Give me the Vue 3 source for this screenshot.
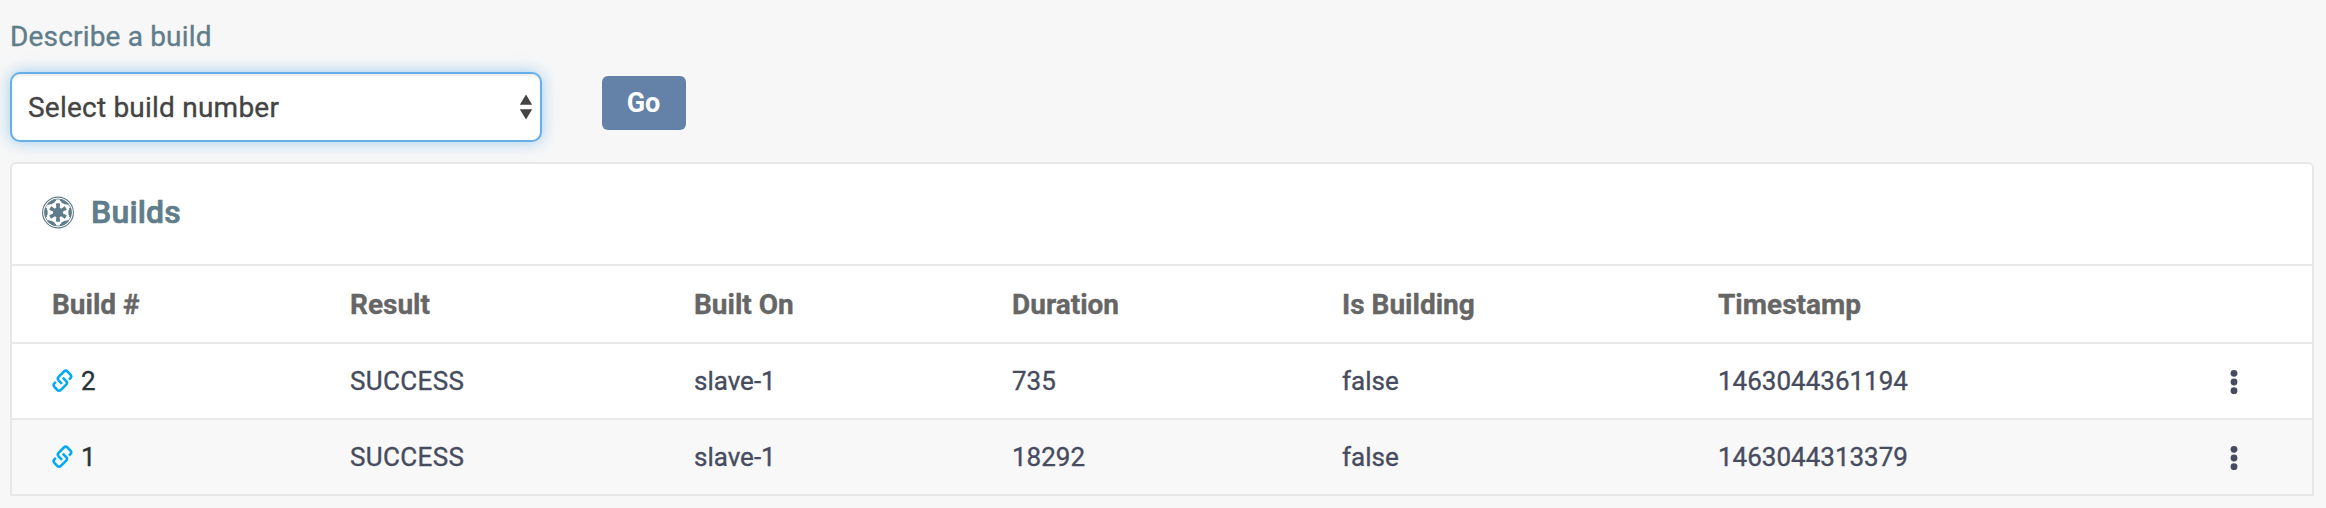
<script setup>
const columns = ['Build #', 'Result', 'Built On', 'Duration', 'Is Building', 'Timestamp']
const builds = [
  { number: 2, result: 'SUCCESS', builtOn: 'slave-1', duration: 735, building: 'false', timestamp: '1463044361194' },
  { number: 1, result: 'SUCCESS', builtOn: 'slave-1', duration: 18292, building: 'false', timestamp: '1463044313379' },
]
const spokes = [0, 60, 120, 180, 240, 300]
</script>

<template>
  <main class="page">
    <label class="label">Describe a build</label>
    <div class="controls">
      <div class="select">
        <span>Select build number</span>
        <svg class="arrows" width="14" height="26" viewBox="0 0 14 26">
          <path d="M7 0.4 L13.2 10.8 H0.8 Z M0.8 15.2 H13.2 L7 25.6 Z" fill="#444" />
        </svg>
      </div>
      <button class="go">Go</button>
    </div>

    <section class="panel">
      <header class="panel-head">
        <svg class="emblem" width="32" height="33" viewBox="-16 -16.5 32 33">
          <circle r="15.4" fill="none" stroke="#607d8b" stroke-width="1.1" />
          <circle r="13.5" fill="none" stroke="#607d8b" stroke-width="0.8" />
          <g v-for="a in spokes" :key="a" :transform="`rotate(${a})`" fill="#607d8b">
            <path d="M-1.5 -3 L-2.1 -8.9 Q0 -9.5 2.1 -8.9 L1.5 -3 Z" />
            <path d="M12.9 -4.9 Q14.6 0 12.9 4.9 L11 4.2 L11.1 2.4 L10.4 2.2 L10.4 -2.2 L11.1 -2.4 L11 -4.2 Z" />
          </g>
          <circle r="5" fill="#607d8b" />
        </svg>
        <h2>Builds</h2>
      </header>
      <table class="builds">
        <colgroup>
          <col class="c1" /><col class="c2" /><col class="c3" /><col class="c4" />
          <col class="c5" /><col class="c6" /><col />
        </colgroup>
        <thead>
          <tr>
            <th v-for="c in columns" :key="c">{{ c }}</th>
            <th></th>
          </tr>
        </thead>
        <tbody>
          <tr v-for="b in builds" :key="b.number">
            <td>
              <a class="build-link">
                <svg width="22" height="24" viewBox="0 0 22 24" fill="none" stroke="#03a9f4" stroke-width="2.6">
                  <path d="M10 14.8 L6.6 11.3 Q5 9.5 6.6 7.8 L11.9 2.5 Q13.8 0.8 15.6 2.6 L18.4 5.6 Q20 7.4 18.4 9.1 L17 10.5" />
                  <path d="M10.8 8.6 L14.2 12.1 Q15.8 13.9 14.2 15.6 L8.9 20.9 Q7 22.6 5.2 20.8 L2.4 17.8 Q0.8 16 2.4 14.3 L3.8 12.9" />
                </svg>
                <span>{{ b.number }}</span>
              </a>
            </td>
            <td class="result">{{ b.result }}</td>
            <td>{{ b.builtOn }}</td>
            <td>{{ b.duration }}</td>
            <td>{{ b.building }}</td>
            <td>{{ b.timestamp }}</td>
            <td class="menu">
              <svg width="8" height="26" viewBox="0 0 8 26" fill="#464c5e">
                <circle cx="4" cy="4.3" r="3.4" />
                <circle cx="4" cy="13" r="3.4" />
                <circle cx="4" cy="21.7" r="3.4" />
              </svg>
            </td>
          </tr>
        </tbody>
      </table>
    </section>
  </main>
</template>

<style>
body {
  background: #f7f7f7;
}
</style>

<style scoped>
.page {
  box-sizing: border-box;
  height: 508px;
  padding: 16px 12px 0 10px;
  overflow: hidden;
  background: #f7f7f7;
  font-family: Roboto, "Liberation Sans", sans-serif;
  font-size: 26px;
  -webkit-text-stroke: 0.35px currentColor;
}
.label {
  display: block;
  height: 40px;
  line-height: 41px;
  font-size: 28px;
  letter-spacing: 0.17px;
  color: #607d8b;
}
.controls {
  display: flex;
  align-items: flex-start;
  gap: 60px;
  margin-top: 16px;
  height: 90px;
}
.select {
  box-sizing: border-box;
  display: flex;
  align-items: center;
  justify-content: space-between;
  width: 532px;
  height: 70px;
  padding: 0 7px 0 16px;
  border: 2px solid #66afe9;
  border-radius: 10px;
  background: #fff;
  box-shadow: inset 0 2px 2px rgba(0, 0, 0, 0.075), 0 0 16px rgba(102, 175, 233, 0.6);
  color: #444;
  font-size: 28px;
  letter-spacing: 0.22px;
}
.select span {
  padding-top: 1px;
}
.go {
  width: 84px;
  height: 54px;
  margin-top: 4px;
  padding: 0 1px 0 0;
  border: 0;
  border-radius: 6px;
  background: #6482a8;
  color: #fff;
  font: 700 27px/54px Roboto, sans-serif;
  -webkit-text-stroke: 0;
}
.panel {
  box-sizing: border-box;
  height: 334px;
  border: 2px solid #e8e8e8;
  border-radius: 6px 6px 0 0;
  background: #fff;
}
.panel-head {
  box-sizing: border-box;
  display: flex;
  align-items: center;
  gap: 17px;
  height: 102px;
  padding: 0 30px 4px;
  border-bottom: 2px solid #e8e8e8;
}
.panel-head h2 {
  margin: 0;
  color: #607d8b;
  font-size: 32px;
  font-weight: 500;
  letter-spacing: 0.2px;
  -webkit-text-stroke: 0.7px currentColor;
}
.builds {
  width: 100%;
  table-layout: fixed;
  border-collapse: separate;
  border-spacing: 0;
}
.c1 { width: 338px; }
.c2 { width: 344px; }
.c3 { width: 318px; }
.c4 { width: 330px; }
.c5 { width: 376px; }
.c6 { width: 498px; }
th,
td {
  box-sizing: border-box;
  padding: 0;
  text-align: left;
  vertical-align: middle;
  white-space: nowrap;
}
th:first-child,
td:first-child {
  padding-left: 40px;
}
th {
  height: 78px;
  border-bottom: 2px solid #e8e8e8;
  color: #666;
  font-size: 28px;
  font-weight: 700;
}
td {
  height: 76px;
  border-bottom: 2px solid #e8e8e8;
  color: #464c5e;
}
.result {
  letter-spacing: 0.35px;
}
tbody tr:last-child td {
  height: 74px;
  border-bottom: 0;
  background: #f8f8f8;
}
.build-link {
  display: flex;
  align-items: center;
  gap: 7px;
  color: #263238;
}
.menu svg {
  display: block;
  margin: 2px 0 0 14px;
}
</style>
